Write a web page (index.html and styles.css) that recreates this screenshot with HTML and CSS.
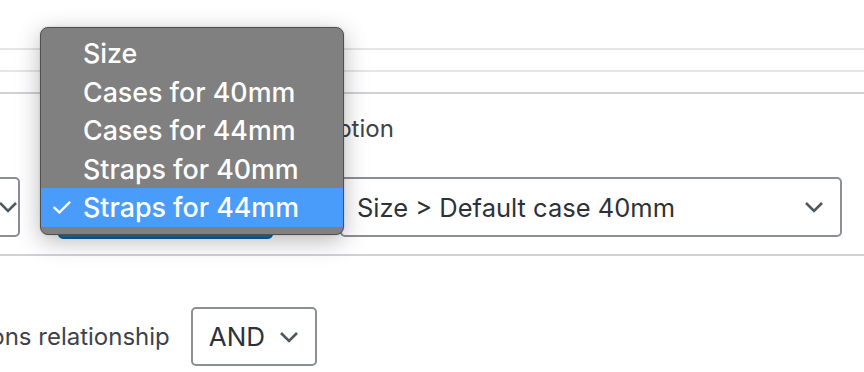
FILE: index.html
```html
<!DOCTYPE html>
<html lang="en">
<head>
  <meta charset="UTF-8" />
  <title>Conditions</title>
  <link rel="stylesheet" href="styles.css">
</head>
<body>
  <div class="page">
    <div class="rules">
      <div class="rule"></div>
      <div class="rule"></div>
      <div class="rule dark"></div>
    </div>

    <div class="cond-label">Select option</div>

    <div class="cond-row">
      <div class="select stub">
        <svg class="chev" width="20" height="12" viewBox="0 0 20 12"><path d="M2 2l8 8 8-8" /></svg>
      </div>
      <div class="btn-primary">Select</div>
      <div class="select wide">
        <span>Size &gt; Default case 40mm</span>
        <svg class="chev" width="20" height="12" viewBox="0 0 20 12"><path d="M2 2l8 8 8-8" /></svg>
      </div>
    </div>

    <div class="rule dark bottom"></div>

    <div class="relation">
      <span class="relation-label">Conditions relationship</span>
      <div class="select small">
        <span>AND</span>
        <svg class="chev" width="20" height="12" viewBox="0 0 20 12"><path d="M2 2l8 8 8-8" /></svg>
      </div>
    </div>
  </div>

  <ul class="menu">
    <li>Size</li>
    <li>Cases for 40mm</li>
    <li>Cases for 44mm</li>
    <li>Straps for 40mm</li>
    <li class="active"><span class="tick">✓</span>Straps for 44mm</li>
  </ul>
</body>
</html>
```

FILE: styles.css
```css
body {
  margin: 0;
  background: #fff;
  font-family: Inter, "Noto Sans", sans-serif;
  color: #2c3338;
  overflow: hidden;
}
.page {
  width: 864px;
  height: 372px;
}
.rules {
  padding-top: 48px;
}
.rule {
  height: 2px;
  background: #e6e6e6;
  margin-bottom: 20px;
}
.rule.dark {
  background: #d0d1d4;
  margin-bottom: 0;
}
.cond-label {
  margin-top: 20px;
  padding-left: 245px;
  font-size: 24px;
  line-height: 30px;
  color: #3c434a;
}
.cond-row {
  display: flex;
  align-items: flex-start;
  margin-top: 33px;
  height: 62px;
}
.select {
  box-sizing: border-box;
  height: 60px;
  border: 2px solid #8c8f94;
  border-radius: 5px;
  background: #fff;
  display: flex;
  align-items: center;
  justify-content: space-between;
  font-size: 25.5px;
  color: #2c3338;
}
.chev path {
  fill: none;
  stroke: #50575e;
  stroke-width: 2.6;
}
.select.stub {
  width: 40px;
  margin-left: -20px;
  padding-left: 16px;
  justify-content: flex-start;
}
.btn-primary {
  width: 215px;
  height: 62px;
  margin-left: 38px;
  box-sizing: border-box;
  background: #2271b1;
  border: 2px solid #135e96;
  border-radius: 5px;
  color: #fff;
  font-size: 22px;
  display: flex;
  align-items: center;
  justify-content: center;
}
.select.wide {
  width: 502px;
  margin-left: 67px;
  padding: 0 16px 0 15px;
}
.rule.bottom {
  margin-top: 15px;
}
.relation {
  display: flex;
  align-items: center;
  margin-top: 51px;
}
.relation-label {
  font-size: 24px;
  color: #3c434a;
  margin-left: -90px;
  margin-right: 21px;
}
.select.small {
  width: 126px;
  height: 59px;
  padding: 0 16px 0 16px;
  font-size: 26px;
}
.menu {
  position: absolute;
  left: 40px;
  top: 27px;
  width: 304px;
  height: 208px;
  box-sizing: border-box;
  margin: 0;
  padding: 6px 0 0;
  list-style: none;
  background: #808080;
  border: 1px solid #4f4f4f;
  border-radius: 8px;
  box-shadow: 0 6px 24px rgba(0, 0, 0, 0.28), 0 0 2px rgba(0, 0, 0, 0.2);
}
.menu li {
  position: relative;
  height: 38.5px;
  line-height: 38.5px;
  padding-left: 42px;
  font-size: 26.8px;
  font-weight: 500;
  color: #fff;
}
.menu li.active {
  background: #4a9cfb;
}
.tick {
  position: absolute;
  left: 9px;
  font-size: 26px;
  font-weight: 400;
}
```
